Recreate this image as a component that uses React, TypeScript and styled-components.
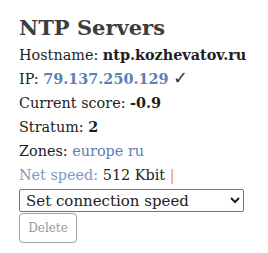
import React from "react";
import styled, { createGlobalStyle } from "styled-components";

const Global = createGlobalStyle`
  html, body { margin: 0; padding: 0; background: #fff; }
  body { font-family: "DejaVu Serif", "Liberation Serif", serif; color: #222; }
`;

const Page = styled.div`
  padding: 14px 0 0 19px;
`;

const Title = styled.h2`
  margin: 0 0 1px 0;
  font-size: 21px;
  line-height: 28px;
  font-weight: bold;
  color: #3d3d3d;
`;

const Line = styled.div`
  font-size: 14.4px;
  line-height: 24px;
  white-space: nowrap;
`;

const Strong = styled.b`
  font-weight: bold;
  color: #1e1e1e;
`;

const Link = styled.a<{ $bold?: boolean }>`
  color: #5a80b6;
  text-decoration: none;
  font-weight: ${(p) => (p.$bold ? "bold" : "normal")};
`;

const Check = styled.span`
  font-family: "DejaVu Sans", sans-serif;
  font-size: 18px;
  line-height: 0;
  color: #333;
`;

const Muted = styled.span`
  color: #7c98c8;
`;

const Bar = styled.span`
  color: #e39a2a;
`;

const Select = styled.select`
  display: block;
  width: 225px;
  height: 23px;
  margin-top: 2px;
  font-family: "DejaVu Serif", serif;
  font-size: 15px;
  color: #222;
  background: #fff;
  border: 1px solid #767676;
  border-radius: 2px;
  padding: 0 2px;
`;

const Button = styled.button`
  display: block;
  margin-top: 1px;
  height: 30px;
  width: 58px;
  font-family: "DejaVu Serif", serif;
  font-size: 12px;
  color: #9a9a9a;
  background: #fff;
  border: 1px solid #a0a0a0;
  border-radius: 4px;
  padding: 0;
`;

export default function App() {
  return (
    <>
      <Global />
      <Page>
        <Title>NTP Servers</Title>
        <Line>
          Hostname: <Strong>ntp.kozhevatov.ru</Strong>
        </Line>
        <Line>
          IP: <Link $bold href="#">79.137.250.129</Link> <Check>✓</Check>
        </Line>
        <Line>
          Current score: <Strong>-0.9</Strong>
        </Line>
        <Line>
          Stratum: <Strong>2</Strong>
        </Line>
        <Line>
          Zones: <Link href="#">europe</Link> <Link href="#">ru</Link>
        </Line>
        <Line>
          <Muted>Net speed:</Muted> 512 Kbit <Bar>|</Bar>
        </Line>
        <Select defaultValue="">
          <option value="">Set connection speed</option>
        </Select>
        <Button disabled>Delete</Button>
      </Page>
    </>
  );
}
